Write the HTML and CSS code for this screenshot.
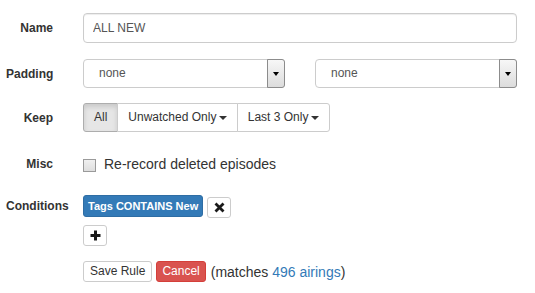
FILE: index.html
```html
<!DOCTYPE html>
<html lang="en">
<head>
    <meta charset="UTF-8">
    <title>Edit Rule</title>
    <link rel="stylesheet" href="styles.css">
</head>
<body>
    <div class="rule-form">
        <div class="form-row row-name">
            <label class="row-label">Name</label>
            <div class="row-control">
                <input type="text" class="text-input" value="ALL NEW">
            </div>
        </div>

        <div class="form-row row-padding">
            <label class="row-label">Padding</label>
            <div class="row-control split">
                <div class="fake-select">
                    <span class="select-value">none</span>
                    <span class="select-arrow"><span class="tri"></span></span>
                </div>
                <div class="fake-select">
                    <span class="select-value">none</span>
                    <span class="select-arrow"><span class="tri"></span></span>
                </div>
            </div>
        </div>

        <div class="form-row row-keep">
            <label class="row-label">Keep</label>
            <div class="row-control">
                <div class="btn-group">
                    <button class="btn btn-sm active">All</button>
                    <button class="btn btn-sm">Unwatched Only <span class="caret"></span></button>
                    <button class="btn btn-sm">Last 3 Only <span class="caret"></span></button>
                </div>
            </div>
        </div>

        <div class="form-row row-misc">
            <label class="row-label">Misc</label>
            <div class="row-control">
                <label class="check">
                    <span class="check-box"></span>
                    Re-record deleted episodes
                </label>
            </div>
        </div>

        <div class="form-row row-conditions">
            <label class="row-label">Conditions</label>
            <div class="row-control stack">
                <div class="cond-line">
                    <span class="cond-tag">Tags CONTAINS New</span>
                    <button class="btn btn-icon remove">
                        <svg width="11" height="11" viewBox="0 0 11 11"><path d="M1.5 1.5 L9.5 9.5 M9.5 1.5 L1.5 9.5" stroke="#1a1a1a" stroke-width="2.8" fill="none"/></svg>
                    </button>
                </div>
                <div class="cond-line">
                    <button class="btn btn-icon">
                        <svg width="11" height="11" viewBox="0 0 11 11"><path d="M5.5 0.5 V10.5 M0.5 5.5 H10.5" stroke="#1a1a1a" stroke-width="3" fill="none"/></svg>
                    </button>
                </div>
                <div class="actions">
                    <button class="btn btn-xs btn-save">Save Rule</button>
                    <button class="btn btn-xs btn-danger">Cancel</button>
                    <span class="matches">(matches <a href="#">496 airings</a>)</span>
                </div>
            </div>
        </div>
    </div>
</body>
</html>
```

FILE: styles.css
```css
body {
    margin: 0;
    font-family: "Liberation Sans", Arial, sans-serif;
    font-size: 12px;
    color: #333;
    background: #fff;
}
.rule-form {
    padding-top: 13px;
    width: 517px;
}
.form-row {
    display: flex;
    align-items: center;
}
.row-label {
    width: 47px;
    margin-left: 6px;
    margin-right: 30px;
    flex-shrink: 0;
    text-align: right;
    white-space: nowrap;
    font-weight: bold;
}
.row-control {
    flex: 1;
}
.row-name {
    margin-bottom: 16px;
}
.row-padding {
    margin-bottom: 15px;
}
.row-keep {
    margin-bottom: 22px;
}
.row-misc {
    margin-bottom: 21px;
}
.row-conditions {
    align-items: flex-start;
}
.row-conditions .row-label {
    line-height: 22px;
}

/* text input */
.text-input {
    box-sizing: border-box;
    width: 100%;
    height: 30px;
    margin: 0;
    padding: 0 9px;
    font-family: inherit;
    font-size: 12px;
    color: #555;
    border: 1px solid #ccc;
    border-radius: 4px;
    box-shadow: inset 0 1px 1px rgba(0,0,0,.075);
    outline: none;
}

/* padding selects */
.split {
    display: grid;
    grid-template-columns: 1fr 1fr;
    column-gap: 30px;
}
.fake-select {
    display: flex;
    height: 29px;
    box-sizing: border-box;
    border: 1px solid #ccc;
    border-radius: 4px;
    color: #555;
}
.select-value {
    flex: 1;
    line-height: 27px;
    padding-left: 15px;
}
.select-arrow {
    width: 16px;
    margin: -1px -1px -1px 0;
    border: 1px solid #8c8c8c;
    border-radius: 0 3px 3px 0;
    background: linear-gradient(#f7f7f7, #dcdcdc);
    display: flex;
    align-items: center;
    justify-content: center;
}
.tri {
    width: 0;
    height: 0;
    border-top: 4px solid #000;
    border-left: 3px solid transparent;
    border-right: 3px solid transparent;
}

/* buttons */
.btn {
    font-family: inherit;
    color: #333;
    background: #fff;
    border: 1px solid #ccc;
    cursor: pointer;
    margin: 0;
}
.btn-group {
    display: inline-flex;
}
.btn-sm {
    font-size: 12px;
    line-height: 17px;
    padding: 5px 10px;
    border-radius: 0;
    margin-left: -1px;
}
.btn-group .btn-sm:first-child {
    margin-left: 0;
    border-radius: 3px 0 0 3px;
}
.btn-group .btn-sm:last-child {
    border-radius: 0 3px 3px 0;
}
.btn-sm.active {
    background: #e6e6e6;
    border-color: #adadad;
    box-shadow: inset 0 3px 5px rgba(0,0,0,.125);
}
.caret {
    display: inline-block;
    width: 0;
    height: 0;
    margin-left: -1px;
    vertical-align: middle;
    border-top: 4px solid #333;
    border-left: 4px solid transparent;
    border-right: 4px solid transparent;
}

/* checkbox */
.check {
    display: flex;
    align-items: center;
    font-size: 14px;
    line-height: 20px;
}
.check-box {
    width: 11px;
    height: 11px;
    margin-right: 8px;
    margin-top: 3px;
    border: 1px solid #9a9a9a;
    background: linear-gradient(#f0f0f0, #dedede);
}

/* conditions */
.stack {
    display: flex;
    flex-direction: column;
}
.cond-line {
    display: flex;
    align-items: flex-start;
    margin-bottom: 7px;
}
.cond-tag {
    box-sizing: border-box;
    height: 22px;
    line-height: 20px;
    padding: 0 4px;
    font-size: 11px;
    font-weight: bold;
    color: #fff;
    background: #337ab7;
    border: 1px solid #2e6da4;
    border-radius: 3px;
}
.btn-icon {
    box-sizing: border-box;
    width: 24px;
    height: 21px;
    padding: 0;
    border-radius: 3px;
    display: flex;
    align-items: center;
    justify-content: center;
}
.remove {
    margin-left: 4px;
    margin-top: 2px;
}
.actions {
    display: flex;
    align-items: center;
    margin-top: 8px;
}
.btn-xs {
    font-size: 12px;
    line-height: 19px;
    padding: 0 5px;
    border-radius: 3px;
}
.btn-save {
    padding: 0 6px;
    margin-right: 4px;
}
.btn-danger {
    color: #fff;
    background: #d9534f;
    border-color: #d43f3a;
    margin-right: 5px;
}
.matches {
    font-size: 14px;
}
.matches a {
    color: #337ab7;
    text-decoration: none;
}
```
